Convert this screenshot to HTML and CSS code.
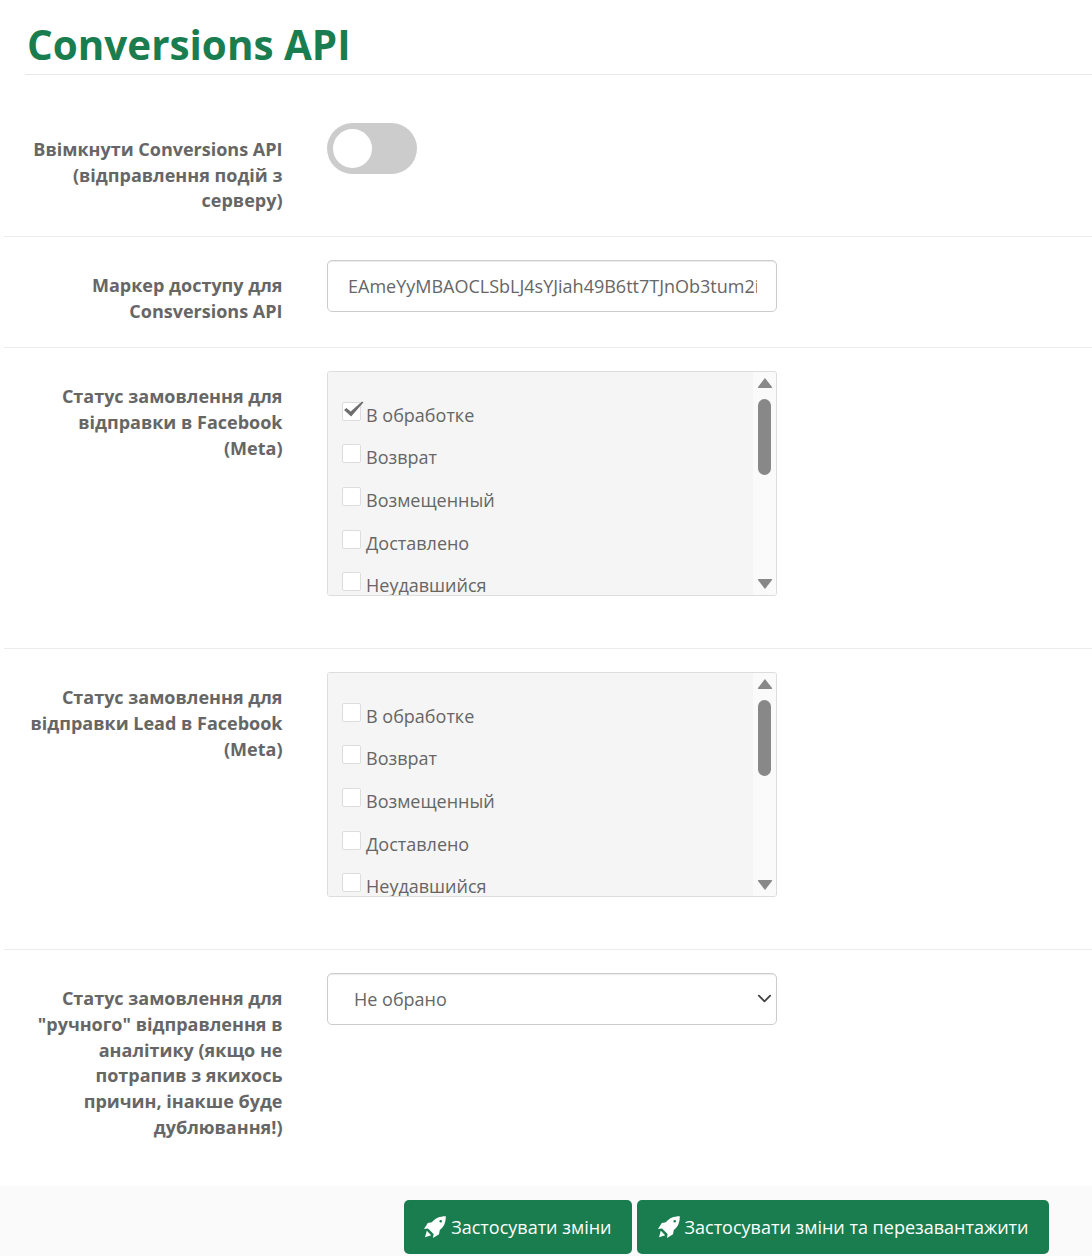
FILE: index.html
```html
<!DOCTYPE html>
<html lang="en">

<head>
    <meta charset="UTF-8">
    <meta name="viewport" content="width=device-width, initial-scale=1.0">
    <title>Conversions API</title>
    <link rel="stylesheet" href="styles.css">
</head>

<body>

    <h1 class="page-title">Conversions API</h1>

    <div class="form-row row-toggle">
        <label class="field-label">Ввімкнути Conversions API (відправлення подій з серверу)</label>
        <div class="field">
            <span class="switch"><span class="knob"></span></span>
        </div>
    </div>

    <div class="form-row row-token">
        <label class="field-label">Маркер доступу для Consversions API</label>
        <div class="field">
            <input class="text-input" type="text" value="EAmeYyMBAOCLSbLJ4sYJiah49B6tt7TJnOb3tum2iZBqLkW0xHvT">
        </div>
    </div>

    <div class="form-row row-list">
        <label class="field-label">Статус замовлення для відправки в Facebook (Meta)</label>
        <div class="field">
            <div class="check-list">
                <div class="check-items">
                    <div class="check-item">
                        <span class="box">
                            <svg class="tick" viewBox="0 0 22 18"><path d="M1 9.500l2.500-2L8 11 20 .5l1.500 1L8.500 16.500z"/></svg>
                        </span>
                        В обработке
                    </div>
                    <div class="check-item"><span class="box"></span> Возврат</div>
                    <div class="check-item"><span class="box"></span> Возмещенный</div>
                    <div class="check-item"><span class="box"></span> Доставлено</div>
                    <div class="check-item"><span class="box"></span> Неудавшийся</div>
                </div>
                <div class="scroll-track">
                    <svg class="arrow" viewBox="0 0 16 12"><path d="M8 1l7 9q.5 1-.5 1h-13q-1 0-.5-1z"/></svg>
                    <div class="scroll-thumb"></div>
                    <svg class="arrow arrow-down" viewBox="0 0 16 12"><path d="M8 11l7-9q.5-1-.5-1h-13q-1 0-.5 1z"/></svg>
                </div>
            </div>
        </div>
    </div>

    <div class="form-row row-list">
        <label class="field-label">Статус замовлення для відправки Lead в Facebook (Meta)</label>
        <div class="field">
            <div class="check-list">
                <div class="check-items">
                    <div class="check-item"><span class="box"></span> В обработке</div>
                    <div class="check-item"><span class="box"></span> Возврат</div>
                    <div class="check-item"><span class="box"></span> Возмещенный</div>
                    <div class="check-item"><span class="box"></span> Доставлено</div>
                    <div class="check-item"><span class="box"></span> Неудавшийся</div>
                </div>
                <div class="scroll-track">
                    <svg class="arrow" viewBox="0 0 16 12"><path d="M8 1l7 9q.5 1-.5 1h-13q-1 0-.5-1z"/></svg>
                    <div class="scroll-thumb"></div>
                    <svg class="arrow arrow-down" viewBox="0 0 16 12"><path d="M8 11l7-9q.5-1-.5-1h-13q-1 0-.5 1z"/></svg>
                </div>
            </div>
        </div>
    </div>

    <div class="form-row row-select">
        <label class="field-label">Статус замовлення для "ручного" відправлення в аналітику (якщо не потрапив з якихось причин, інакше буде дублювання!)</label>
        <div class="field">
            <div class="select-wrap">
                <select class="select-input">
                    <option>Не обрано</option>
                </select>
                <svg class="chevron" viewBox="0 0 16 16"><path d="M2 5l6 6 6-6"/></svg>
            </div>
        </div>
    </div>

    <div class="footer-bar">
        <button class="btn">
            <svg class="rocket" viewBox="0 0 22 22"><path fill-rule="evenodd" d="M21.800.2C15.500.2 11 2.200 8 6.200L3.800 7 0 13l4-.6 5.600 5.600-.6 4 6-3.800.8-4.200c4-3 6-7.500 6-13.800zM16.700 4a1.300 1.300 0 1 1 0 2.600 1.300 1.300 0 0 1 0-2.600zM2.800 14.800l4.400 4.400-6.200 2z"/></svg>
            Застосувати зміни
        </button>
        <button class="btn">
            <svg class="rocket" viewBox="0 0 22 22"><path fill-rule="evenodd" d="M21.800.2C15.500.2 11 2.200 8 6.200L3.800 7 0 13l4-.6 5.600 5.600-.6 4 6-3.800.8-4.200c4-3 6-7.500 6-13.800zM16.700 4a1.300 1.300 0 1 1 0 2.600 1.300 1.300 0 0 1 0-2.600zM2.800 14.800l4.400 4.400-6.200 2z"/></svg>
            Застосувати зміни та перезавантажити
        </button>
    </div>

</body>

</html>
```

FILE: styles.css
```css
body {
    font-family: "Open Sans", sans-serif;
    font-size: 18px;
    color: #666;
    background-color: #fff;
    margin: 0;
    height: 1256px;
    overflow: hidden;
}

.page-title {
    font-size: 40.400px;
    line-height: 52px;
    font-weight: 700;
    color: #1a7d4f;
    margin: 0 0 0 25px;
    padding: 19px 0 3px 2px;
    border-bottom: 1px solid #e8e8e8;
}

.form-row {
    display: flex;
    margin-left: 4px;
    border-bottom: 1px solid #ececec;
    box-sizing: border-box;
}

.row-toggle {
    height: 162px;
    padding-top: 48px;
}

.row-toggle .field-label {
    padding-top: 14px;
}

.row-token {
    height: 111px;
    padding-top: 23px;
}

.row-list {
    height: 301px;
    padding-top: 23px;
}

.row-select {
    height: 236px;
    padding-top: 23px;
    border-bottom: none;
}

.field-label {
    width: 258px;
    margin-left: 20.500px;
    margin-right: 0.500px;
    padding-top: 13.300px;
    text-align: right;
    font-weight: 700;
    line-height: 25.714px;
}

.field {
    margin-left: 44px;
    width: 450px;
}

.switch {
    display: block;
    position: relative;
    width: 90px;
    height: 51px;
    border-radius: 26px;
    background-color: #ccc;
}

.knob {
    position: absolute;
    left: 6px;
    top: 6px;
    width: 39px;
    height: 39px;
    border-radius: 50%;
    background-color: #fff;
}

.text-input {
    display: block;
    width: 100%;
    height: 52px;
    box-sizing: border-box;
    padding: 0 19px 0 20px;
    border: 1px solid #ccc;
    border-radius: 5px;
    box-shadow: inset 0 1px 1px rgba(0, 0, 0, 0.08);
    font-family: inherit;
    font-size: 18px;
    color: #666;
}

.check-list {
    display: flex;
    height: 225px;
    box-sizing: border-box;
    border: 1px solid #ddd;
    border-radius: 3px;
    box-shadow: inset 0 1px 2px rgba(0, 0, 0, 0.08);
    overflow: hidden;
}

.check-items {
    flex: 1;
    padding: 22.600px 0 0 14px;
    background-color: #f5f5f5;
    overflow: hidden;
}

.check-item {
    display: flex;
    align-items: flex-start;
    gap: 5px;
    height: 42.700px;
    line-height: 41px;
    white-space: nowrap;
}

.box {
    position: relative;
    flex: none;
    width: 19px;
    height: 19px;
    margin-top: 7px;
    box-sizing: border-box;
    border: 1px solid #ddd;
    border-radius: 2px;
    background-color: #fff;
}

.tick {
    position: absolute;
    left: 0;
    top: -2px;
    width: 21px;
    height: 17px;
    fill: #6e6e6e;
}

.scroll-track {
    position: relative;
    flex: none;
    display: flex;
    flex-direction: column;
    align-items: center;
    width: 23px;
    background-color: #fafafa;
}

.arrow {
    flex: none;
    width: 16px;
    height: 12px;
    margin-top: 5px;
    fill: #888;
}

.arrow-down {
    margin-top: auto;
    margin-bottom: 5px;
}

.scroll-thumb {
    width: 13px;
    height: 76px;
    margin-top: 10px;
    border-radius: 7px;
    background-color: #888;
}

.select-wrap {
    position: relative;
}

.select-input {
    display: block;
    width: 100%;
    height: 52px;
    box-sizing: border-box;
    padding: 0 26px;
    appearance: none;
    border: 1px solid #ccc;
    border-radius: 5px;
    background-color: #fff;
    box-shadow: inset 0 1px 1px rgba(0, 0, 0, 0.08);
    font-family: inherit;
    font-size: 18px;
    color: #666;
}

.chevron {
    position: absolute;
    right: 5px;
    top: 18px;
    width: 15px;
    height: 15px;
    fill: none;
    stroke: #444;
    stroke-width: 2;
    stroke-linecap: round;
    stroke-linejoin: round;
}

.footer-bar {
    display: flex;
    justify-content: flex-end;
    gap: 5px;
    height: 70px;
    box-sizing: border-box;
    padding: 14px 43px 0 0;
    background-color: #fafafa;
}

.btn {
    display: flex;
    align-items: center;
    gap: 5px;
    height: 54px;
    padding: 0 20.500px;
    border: none;
    border-radius: 5px;
    background-color: #1a7d4f;
    color: #fff;
    font-family: inherit;
    font-size: 18px;
}

.rocket {
    flex: none;
    width: 22px;
    height: 22px;
    fill: #fff;
}
```
